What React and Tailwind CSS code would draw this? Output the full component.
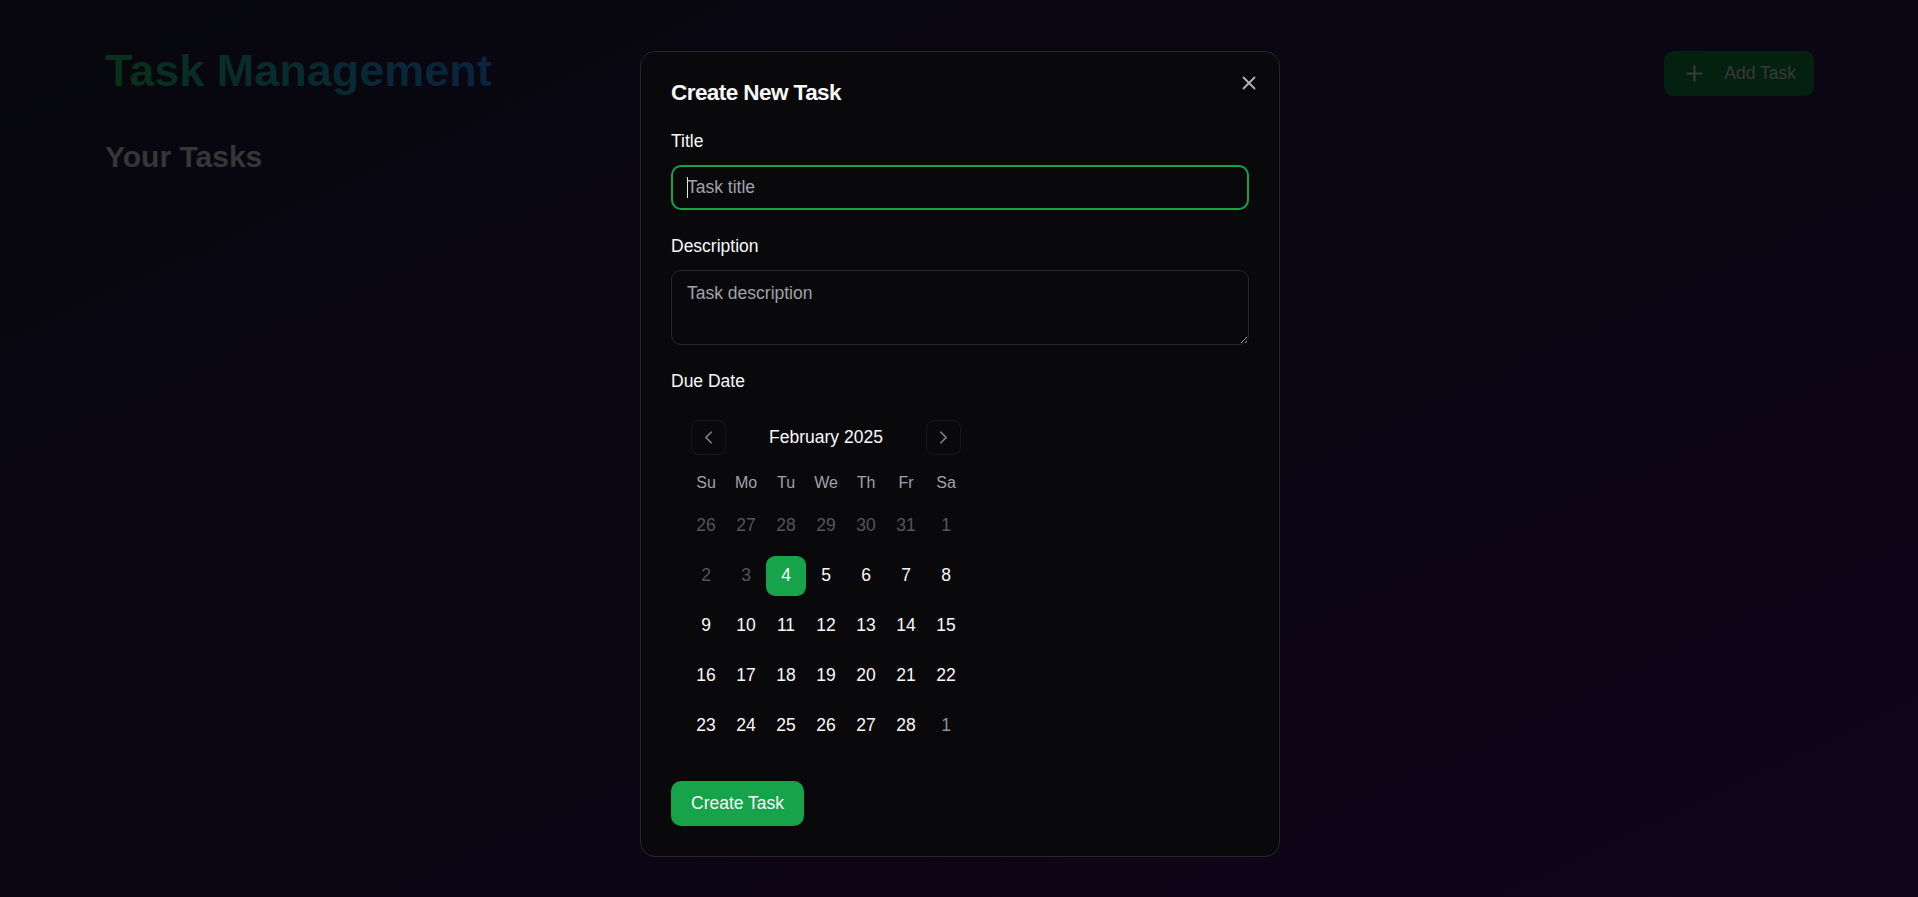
import React from "react";
import { X, ChevronLeft, ChevronRight, Plus } from "lucide-react";

const weeks = [
  [
    { d: 26, s: "dis" },
    { d: 27, s: "dis" },
    { d: 28, s: "dis" },
    { d: 29, s: "dis" },
    { d: 30, s: "dis" },
    { d: 31, s: "dis" },
    { d: 1, s: "dis" },
  ],
  [
    { d: 2, s: "dis" },
    { d: 3, s: "dis" },
    { d: 4, s: "sel" },
    { d: 5, s: "" },
    { d: 6, s: "" },
    { d: 7, s: "" },
    { d: 8, s: "" },
  ],
  [9, 10, 11, 12, 13, 14, 15].map((d) => ({ d, s: "" })),
  [16, 17, 18, 19, 20, 21, 22].map((d) => ({ d, s: "" })),
  [
    { d: 23, s: "" },
    { d: 24, s: "" },
    { d: 25, s: "" },
    { d: 26, s: "" },
    { d: 27, s: "" },
    { d: 28, s: "" },
    { d: 1, s: "out" },
  ],
];

const heads = ["Su", "Mo", "Tu", "We", "Th", "Fr", "Sa"];

function DayCell({ d, s }) {
  let cls =
    "flex h-[40px] w-[40px] items-center justify-center rounded-[9px] text-[17.5px] leading-none ";
  if (s === "dis") cls += "text-[#55555a]";
  else if (s === "sel") cls += "bg-[#16a34a] text-white";
  else if (s === "out") cls += "text-[#8e8e94]";
  else cls += "text-[#fafafa]";
  return <div className={cls}>{d}</div>;
}

function Calendar() {
  return (
    <div className="w-[310px] p-[15px]">
      <div className="relative flex h-[35px] items-center justify-center">
        <button className="absolute left-[5px] top-0 flex h-[35px] w-[35px] items-center justify-center rounded-[8px] border border-[#27272a] text-[#fafafa] opacity-50">
          <ChevronLeft size={21} strokeWidth={2} />
        </button>
        <span className="text-[17.5px] font-medium leading-[25px] text-[#fafafa]">
          February 2025
        </span>
        <button className="absolute right-[5px] top-0 flex h-[35px] w-[35px] items-center justify-center rounded-[8px] border border-[#27272a] text-[#fafafa] opacity-50">
          <ChevronRight size={21} strokeWidth={2} />
        </button>
      </div>
      <div className="mt-[16px] flex">
        {heads.map((h) => (
          <div
            key={h}
            className="flex h-[25px] w-[40px] items-center justify-center text-[16px] text-[#a1a1aa]"
          >
            {h}
          </div>
        ))}
      </div>
      {weeks.map((w, i) => (
        <div key={i} className="mt-[10px] flex">
          {w.map((c, j) => (
            <DayCell key={j} d={c.d} s={c.s} />
          ))}
        </div>
      ))}
    </div>
  );
}

export default function App() {
  return (
    <div className="relative min-h-screen w-full overflow-hidden bg-gradient-to-br from-[#07070d] via-[#0b0614] to-[#11051a] font-['Liberation_Sans',Arial,sans-serif]">
      <div className="mx-auto h-[897px] w-[1710px] pl-[1px] pt-[46px]">
        <div className="flex items-start justify-between">
          <h1 className="bg-gradient-to-r from-[#093019] to-[#0c2340] bg-clip-text text-[45px] font-bold leading-[50px] text-transparent">
            Task Management
          </h1>
          <button className="mt-[5px] flex h-[45px] items-center gap-[17px] rounded-[9px] bg-[#04200e] px-[18px] text-[17.5px] text-[#3a3a3a]">
            <Plus size={25} strokeWidth={2} />
            <span>Add Task</span>
          </button>
        </div>
        <h2 className="mt-[41px] text-[30px] font-bold leading-[40px] text-[#363636]">
          Your Tasks
        </h2>
      </div>

      <div className="fixed inset-0 flex justify-center pl-[2px] pt-[51px]">
        <div className="relative h-fit w-[640px] rounded-[15px] border border-[#27272a] bg-[#09090b] p-[30px]">
          <button className="absolute right-[19px] top-[20px] text-[#b2b2b4]">
            <X size={22} strokeWidth={2} />
          </button>
          <h2 className="text-[22.5px] font-semibold leading-[22.5px] tracking-tight text-[#fafafa]">
            Create New Task
          </h2>

          <div className="mt-[24px] flex flex-col">
            <label className="text-[17.5px] font-medium leading-[25px] text-[#fafafa]">
              Title
            </label>
            <div className="relative mt-[11px]">
              <input
                type="text"
                placeholder="Task title"
                className="h-[45px] w-full rounded-[10px] border-2 border-[#16a34a] bg-transparent px-[14px] text-[17.5px] text-[#fafafa] outline-none placeholder:text-[#a1a1aa]"
              />
              <span className="pointer-events-none absolute left-[16px] top-[12px] h-[21px] w-[1px] bg-[#e5e5e5]" />
            </div>

            <label className="mt-[24px] text-[17.5px] font-medium leading-[25px] text-[#fafafa]">
              Description
            </label>
            <textarea
              placeholder="Task description"
              className="mt-[11px] h-[75px] w-full rounded-[10px] border border-[#27272a] bg-transparent px-[15px] py-[10px] text-[17.5px] leading-[25px] text-[#fafafa] outline-none placeholder:text-[#a1a1aa]"
            />

            <label className="mt-[24px] text-[17.5px] font-medium leading-[25px] text-[#fafafa]">
              Due Date
            </label>
            <div className="mt-[11px]">
              <Calendar />
            </div>

            <div className="mt-[20px]">
              <button className="flex h-[45px] items-center rounded-[10px] bg-[#16a34a] px-[20px] text-[17.5px] font-medium text-[#fafafa]">
                Create Task
              </button>
            </div>
          </div>
        </div>
      </div>
    </div>
  );
}
